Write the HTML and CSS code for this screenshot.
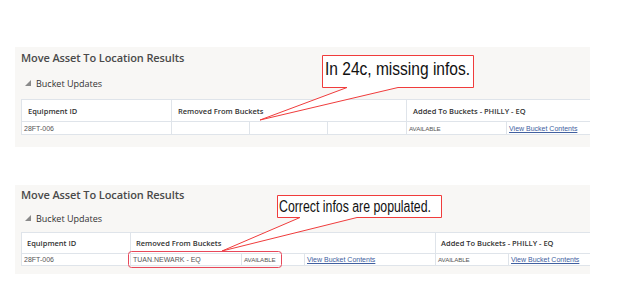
FILE: index.html
```html
<!DOCTYPE html>
<html lang="en">
<head>
    <meta charset="UTF-8">
    <title>Move Asset To Location Results</title>
    <link rel="stylesheet" href="styles.css">
</head>
<body>
    <!-- Before: 24c -->
    <div class="panel panel-first">
        <h2 class="panel-title">Move Asset To Location Results</h2>
        <div class="section-head">
            <svg class="disclose" width="6" height="6" viewBox="0 0 6 6"><polygon points="6,0 6,6 0,6"/></svg>
            <span>Bucket Updates</span>
        </div>
        <table class="grid grid-first">
            <colgroup>
                <col style="width:150px"><col style="width:78px"><col style="width:78px">
                <col style="width:79px"><col style="width:100px"><col style="width:100px">
            </colgroup>
            <tr>
                <th>Equipment ID</th>
                <th colspan="3">Removed From Buckets</th>
                <th colspan="2">Added To Buckets - PHILLY - EQ</th>
            </tr>
            <tr>
                <td>28FT-006</td>
                <td></td>
                <td></td>
                <td></td>
                <td class="status">AVAILABLE</td>
                <td><a href="#">View Bucket Contents</a></td>
            </tr>
        </table>
    </div>

    <!-- After: fixed -->
    <div class="panel panel-second">
        <h2 class="panel-title">Move Asset To Location Results</h2>
        <div class="section-head">
            <svg class="disclose" width="6" height="6" viewBox="0 0 6 6"><polygon points="6,0 6,6 0,6"/></svg>
            <span>Bucket Updates</span>
        </div>
        <table class="grid grid-second">
            <colgroup>
                <col style="width:109px"><col style="width:111px"><col style="width:63px">
                <col style="width:131px"><col style="width:73px"><col style="width:100px">
            </colgroup>
            <tr>
                <th>Equipment ID</th>
                <th colspan="3">Removed From Buckets</th>
                <th colspan="2">Added To Buckets - PHILLY - EQ</th>
            </tr>
            <tr>
                <td>28FT-006</td>
                <td>TUAN.NEWARK - EQ</td>
                <td class="status">AVAILABLE</td>
                <td><a href="#">View Bucket Contents</a></td>
                <td class="status">AVAILABLE</td>
                <td><a href="#">View Bucket Contents</a></td>
            </tr>
        </table>
    </div>

    <!-- Аннотации поверх скриншота -->
    <svg class="notes" width="639" height="290" viewBox="0 0 639 290">
        <path class="callout" d="M322.5,55.5 H473.5 V87.5 H398 L260,120 L347,87.5 H322.5 Z"/>
        <text class="note-text" x="325" y="75" font-size="18.5" textLength="145" lengthAdjust="spacingAndGlyphs">In 24c, missing infos.</text>

        <path class="callout" d="M277.5,195.5 H441.5 V217.5 H357 L222,251 L300,217.5 H277.5 Z"/>
        <text class="note-text" x="279" y="211.5" font-size="16" textLength="152" lengthAdjust="spacingAndGlyphs">Correct infos are populated.</text>

        <rect class="mark" x="128.5" y="251.5" width="153" height="16" rx="3"/>
    </svg>
</body>
</html>
```

FILE: styles.css
```css
/* Базовые стили */
body {
    margin: 0;
    padding: 47px 0 0 15px;
    width: 639px;
    height: 290px;
    box-sizing: border-box;
    background-color: #ffffff;
    font-family: "Open Sans", Arial, sans-serif;
    color: #333;
    position: relative;
    overflow: hidden;
}

/* Панели */
.panel {
    width: 575px;
    background-color: #f8f7f5;
    padding-left: 6px;
    box-sizing: border-box;
    overflow: hidden;
}

.panel-first {
    height: 100px;
    padding-top: 1px;
}

.panel-second {
    height: 89px;
    margin-top: 38px;
}

.panel-title {
    margin: 0;
    font-size: 11px;
    font-weight: 600;
    line-height: 20px;
    color: #4a4a4a;
    letter-spacing: -0.1px;
}

.panel-second .panel-title {
    line-height: 19px;
}

.section-head {
    display: flex;
    align-items: center;
    gap: 5px;
    height: 16px;
    margin: 7px 0 8px 4px;
    font-size: 9px;
    color: #333;
}

.panel-second .section-head {
    margin: 6px 0 6px 4px;
}

.disclose polygon {
    fill: #8a8a8a;
}

/* Таблица */
.grid {
    border-collapse: collapse;
    table-layout: fixed;
    background-color: #ffffff;
}

.grid-first {
    width: 585px;
}

.grid-second {
    width: 587px;
}

.grid th,
.grid td {
    border: 1px solid #dfe4ea;
    padding: 0;
    white-space: nowrap;
    overflow: hidden;
}

.grid th {
    height: 21px;
    padding-left: 6px;
    text-align: left;
    font-size: 7.5px;
    font-weight: 600;
    color: #333;
}

.grid td {
    height: 12px;
    padding-left: 2px;
    font-family: "Liberation Sans", Arial, sans-serif;
    font-size: 7px;
    color: #555;
}

.grid td.status {
    font-size: 6.2px;
    letter-spacing: -0.1px;
}

.panel-second .grid th {
    height: 20px;
    padding-left: 5px;
}

.panel-second .grid td {
    height: 11px;
}

.grid a {
    color: #4160a0;
}

/* Аннотации */
.notes {
    position: absolute;
    left: 0;
    top: 0;
    pointer-events: none;
}

.callout {
    fill: #ffffff;
    stroke: #f03c3c;
    stroke-width: 1;
}

.note-text {
    font-family: "Liberation Sans", Arial, sans-serif;
    fill: #111;
}

.mark {
    fill: none;
    stroke: #e8485a;
    stroke-width: 1;
}
```
